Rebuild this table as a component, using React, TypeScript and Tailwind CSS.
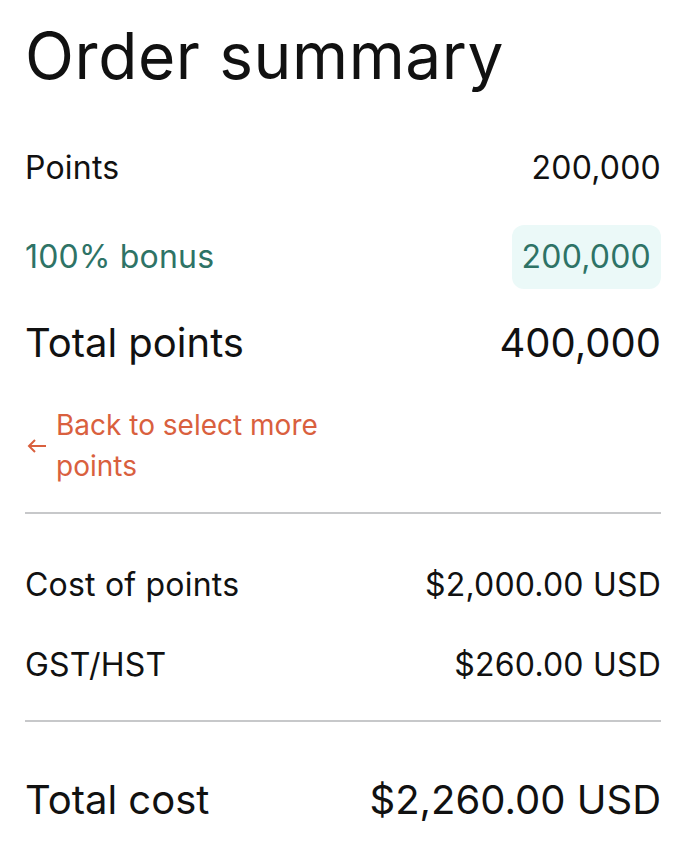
import * as React from "react";

function Row({
  label,
  value,
  className = "",
}: {
  label: string;
  value: React.ReactNode;
  className?: string;
}) {
  return (
    <div className={`flex h-[64px] items-center justify-between ${className}`}>
      <span>{label}</span>
      {value}
    </div>
  );
}

export default function App() {
  return (
    <div className="min-h-[862px] bg-white px-[25px] pt-[17px] text-[#111111] font-['Inter',sans-serif]">
      <h1 className="text-[64px] leading-[77px] font-normal tracking-[0.6px]">Order summary</h1>

      <Row label="Points" value={<span>200,000</span>} className="mt-[42px] text-[32px] tracking-[0.2px]" />

      <Row
        label="100% bonus"
        value={
          <span className="flex h-[64px] items-center rounded-[12px] bg-[#ebf9f8] px-[10px]">200,000</span>
        }
        className="mt-[25px] text-[32px] tracking-[0.2px] text-[#2e7366]"
      />

      <Row label="Total points" value={<span>400,000</span>} className="mt-[22px] text-[40px]" />

      <a
        href="#"
        className="mt-[30px] flex w-[330px] items-center gap-[9px] pl-[2px] text-[28px] leading-[41px] text-[#d9603e]"
      >
        <svg width="20" height="14" viewBox="0 0 20 14" fill="none" stroke="currentColor" strokeWidth="2" className="shrink-0">
          <path d="M19 7H2M8 1L2 7l6 6" />
        </svg>
        <span>Back to select more points</span>
      </a>

      <div className="mt-[25px] h-[2px] bg-[#c7c8ca]" />

      <Row label="Cost of points" value={<span>$2,000.00 USD</span>} className="mt-[39px] text-[32px] tracking-[0.2px]" />
      <Row label="GST/HST" value={<span>$260.00 USD</span>} className="mt-[16px] text-[32px] tracking-[0.2px]" />

      <div className="mt-[23px] h-[2px] bg-[#c7c8ca]" />

      <Row label="Total cost" value={<span>$2,260.00 USD</span>} className="mt-[46px] text-[40px]" />
    </div>
  );
}
